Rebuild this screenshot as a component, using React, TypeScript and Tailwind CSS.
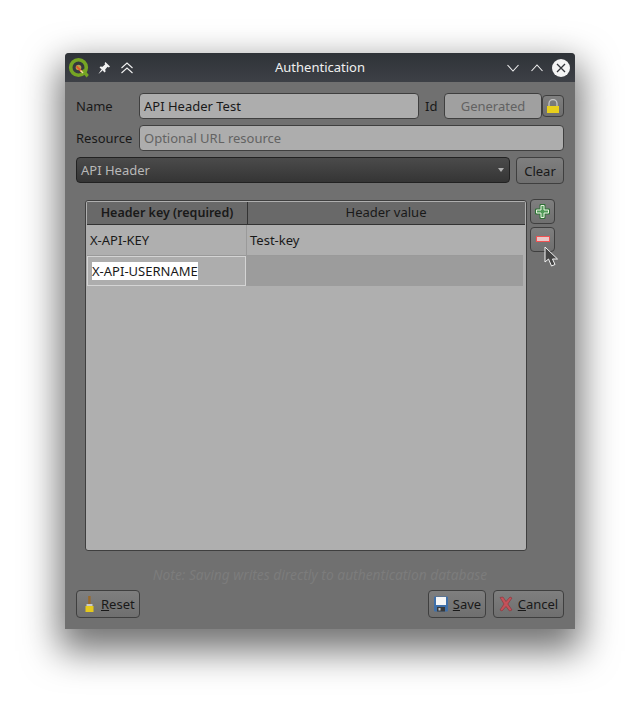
import React from "react";

const btn =
  "flex items-center justify-center rounded-[4px] border border-[#3f3f3f] bg-gradient-to-b from-[#7f7f7f] to-[#6f6f6f] text-[#191919]";

const QgisLogo = () => (
  <svg width="22" height="22" viewBox="0 0 22 22">
    <circle cx="10.5" cy="10.5" r="7.8" fill="none" stroke="#76a524" strokeWidth="3.6" />
    <path d="M13 14 L18.6 20.5 L20.8 18 L16 12 Z" fill="#76a524" />
    <circle cx="10.5" cy="10.5" r="2.8" fill="#b5a04a" />
    <path d="M9 8.5 L14.5 14 L13 15.5 L8 10 Z" fill="#e2552b" />
    <path d="M13 13 L15.5 15.5 L14.5 16.5 L12 14 Z" fill="#f0e0a0" />
  </svg>
);

const Pin = () => (
  <svg width="14" height="14" viewBox="0 0 14 14" fill="#f2f2f2">
    <path d="M8.4 1 L13 5.6 L11.8 6.4 L10.6 5.8 L8.2 8.6 L8.6 10.6 L7.6 11.4 L2.6 6.4 L3.4 5.4 L5.6 5.8 L8.2 3.2 L7.6 2.2 Z" />
    <path d="M4.4 8.4 L5.6 9.6 L1.4 13 Z" />
  </svg>
);

const KeepAbove = () => (
  <svg width="14" height="12" viewBox="0 0 14 12" fill="none" stroke="#f2f2f2" strokeWidth="1.1">
    <path d="M1.5 6 L7 1 L12.5 6" />
    <path d="M1.5 11 L7 6 L12.5 11" />
  </svg>
);

const Chevron = ({ up }: { up?: boolean }) => (
  <svg width="14" height="10" viewBox="0 0 14 10" fill="none" stroke="#f2f2f2" strokeWidth="1.1">
    <path d={up ? "M1.5 8 L7 2 L12.5 8" : "M1.5 2 L7 8 L12.5 2"} />
  </svg>
);

const CloseBtn = () => (
  <svg width="18" height="18" viewBox="0 0 18 18">
    <circle cx="9" cy="9" r="9" fill="#f4f4f4" />
    <path d="M5 5 L13 13 M13 5 L5 13" stroke="#33363b" strokeWidth="1.3" />
  </svg>
);

const Lock = () => (
  <svg width="12" height="14" viewBox="0 0 12 14">
    <path d="M2 7 V4.5 a4 4 0 0 1 8 0 V7" fill="none" stroke="#c4c4c4" strokeWidth="1.3" />
    <rect x="0" y="7" width="12" height="7" fill="#e8cf1c" />
  </svg>
);

const Plus = () => (
  <svg width="15" height="15" viewBox="0 0 15 15">
    <path d="M5 0.5 H10 V5 H14.5 V10 H10 V14.5 H5 V10 H0.5 V5 H5 Z" fill="#4f9a57" stroke="#2f6f36" strokeWidth="1" />
    <path d="M6 1.5 H9 V6 H13.5 V9 H9 V13.5 H6 V9 H1.5 V6 H6 Z" fill="none" stroke="#e8f2e0" strokeWidth="1" />
  </svg>
);

const Minus = () => (
  <svg width="14" height="6" viewBox="0 0 14 6">
    <rect x="0.5" y="0.5" width="13" height="5" fill="#e9c8c8" stroke="#f05252" />
  </svg>
);

const Cursor = () => (
  <svg width="15" height="22" viewBox="0 0 15 22">
    <path d="M1 1 L1 16 L4.5 13 L7.5 20 L11 18.5 L8.5 13 L13.5 13 Z" fill="#444444" stroke="#f4f4f4" strokeWidth="1" />
  </svg>
);

const Broom = () => (
  <svg width="9" height="16" viewBox="0 0 9 16">
    <rect x="3.2" y="0" width="2.4" height="8" fill="#9a6a2a" />
    <rect x="1.5" y="8" width="6" height="2" fill="#c8c8c8" />
    <rect x="0.5" y="10" width="8" height="6" fill="#e5c91c" />
  </svg>
);

const Floppy = () => (
  <svg width="14" height="16" viewBox="0 0 14 16">
    <rect x="0" y="0.5" width="14" height="15" rx="1" fill="#3f6fa8" />
    <rect x="2" y="1" width="10" height="8" fill="#f6f6f6" />
    <rect x="3" y="11" width="8" height="4.5" fill="#3a3a3a" />
    <rect x="4.5" y="12" width="2" height="2.5" fill="#c8c8c8" />
  </svg>
);

const RedX = () => (
  <svg width="14" height="16" viewBox="0 0 14 16">
    <path d="M1 1.5 L4 1 L7 5.5 L11 1 L13 2 L8.8 8 L13 14 L10.5 15 L7 10.5 L3 15 L1 14 L5 8 Z" fill="#c4525a" stroke="#8c3038" strokeWidth="0.6" />
  </svg>
);

export default function App() {
  return (
    <div
      className="w-[640px] h-[706px] bg-white pt-[53px] pl-[65px] overflow-hidden text-[13px] text-[#191919]"
      style={{ fontFamily: '"Noto Sans", sans-serif' }}
    >
      <div className="w-[510px] h-[576px] flex flex-col bg-[#707070] rounded-t-[4px] shadow-[0_16px_36px_6px_rgba(0,0,0,0.55)]">
        {/* title bar */}
        <div className="h-[29px] shrink-0 flex items-center rounded-t-[4px] bg-gradient-to-b from-[#2f3338] to-[#3d4046] pl-[3px] pr-[5px]">
          <QgisLogo />
          <div className="ml-[7px] w-[14px] flex justify-center"><Pin /></div>
          <div className="ml-[9px] w-[14px] flex justify-center"><KeepAbove /></div>
          <div className="flex-1 text-center text-[#f0f0f0]">Authentication</div>
          <Chevron />
          <div className="ml-[10px]"><Chevron up /></div>
          <div className="ml-[8px]"><CloseBtn /></div>
        </div>

        <div className="flex-1 flex flex-col pt-[11px] pl-[11px] pr-[11px]">
          {/* name row */}
          <div className="flex items-center h-[26px]">
            <div className="w-[63px] mt-[2px]">Name</div>
            <div className="w-[280px] h-[26px] flex items-center rounded-[4px] border border-[#3f3f3f] bg-[#adadad] px-[4px] pt-[2px]">
              API Header Test
            </div>
            <div className="w-[25px] pl-[6px] mt-[2px]">Id</div>
            <div className="w-[98px] h-[26px] flex items-center justify-center rounded-[4px] border border-[#3f3f3f] bg-[#a0a0a0] text-[#626262] pt-[2px]">
              Generated
            </div>
            <div className={`${btn} w-[22px] h-[22px]`}><Lock /></div>
          </div>

          {/* resource row */}
          <div className="flex items-center h-[26px] mt-[6px]">
            <div className="w-[63px] mt-[2px]">Resource</div>
            <div className="w-[425px] h-[26px] flex items-center rounded-[4px] border border-[#3f3f3f] bg-[#adadad] px-[4px] pt-[2px] text-[#636363]">
              Optional URL resource
            </div>
          </div>

          {/* method row */}
          <div className="flex items-start h-[27px] mt-[6px]">
            <div className="relative w-[434px] h-[26px] flex items-center rounded-[4px] border border-[#222222] bg-gradient-to-b from-[#4b4b4b] to-[#353535] px-[4px] pt-[2px] text-[#b8b8b8]">
              API Header
              <div className="absolute right-[5px] top-[10px] border-x-[3px] border-t-[4px] border-x-transparent border-t-[#b0b0b0]" />
            </div>
            <div className={`${btn} ml-[6px] w-[48px] h-[27px]`}><span className="mt-[2px]">Clear</span></div>
          </div>

          {/* header table */}
          <div className="flex items-start mt-[15px] ml-[9px] h-[352px]">
            <div className="w-[442px] h-[351px] mt-[1px] rounded-[3px] border border-[#3f3f3f] bg-[#afafaf] p-[1px]">
              <div className="flex h-[23px] bg-[#696969] border-b border-[#333333]">
                <div className="w-[161px] flex items-center justify-center border-r border-[#333333] font-semibold text-[12.5px]">
                  Header key (required)
                </div>
                <div className="w-[276px] flex items-center justify-center">Header value</div>
              </div>
              <div className="flex h-[31px] w-[436px] border-b border-[#9a9a9a]">
                <div className="w-[160px] flex items-center pl-[3px] pt-[1px] border-r border-[#9a9a9a]">X-API-KEY</div>
                <div className="flex-1 flex items-center pl-[3px] pt-[1px]">Test-key</div>
              </div>
              <div className="flex h-[30px] w-[436px] bg-[#9c9c9c]">
                <div className="w-[159px] h-[30px] flex items-center pl-[4px] bg-[#adadad] border border-[#d4d4d4]">
                  <span className="bg-white leading-[18px]">X-API-USERNAME</span>
                </div>
              </div>
            </div>
            <div className="flex flex-col ml-[3px]">
              <div className={`${btn} w-[25px] h-[25px]`}><Plus /></div>
              <div className="relative mt-[3px]">
                <div className={`${btn} w-[25px] h-[25px] pb-[2px]`}><Minus /></div>
                <div className="absolute left-[14px] top-[19px]"><Cursor /></div>
              </div>
            </div>
          </div>

          <div className="mt-[15px] text-center italic text-[13.8px] text-[#7c7c7c] leading-[18px]">
            Note: Saving writes directly to authentication database
          </div>

          {/* buttons */}
          <div className="flex items-center mt-[6px]">
            <div className={`${btn} w-[64px] h-[28px] gap-[7px] !justify-start pl-[8px]`}>
              <Broom />
              <span className="mt-[2px]"><span className="underline">R</span>eset</span>
            </div>
            <div className="flex-1" />
            <div className={`${btn} w-[58px] h-[28px] gap-[5px] pl-[1px]`}>
              <Floppy />
              <span className="mt-[2px]"><span className="underline">S</span>ave</span>
            </div>
            <div className={`${btn} ml-[7px] w-[71px] h-[28px] gap-[5px]`}>
              <RedX />
              <span className="mt-[2px]"><span className="underline">C</span>ancel</span>
            </div>
          </div>
        </div>
      </div>
    </div>
  );
}
